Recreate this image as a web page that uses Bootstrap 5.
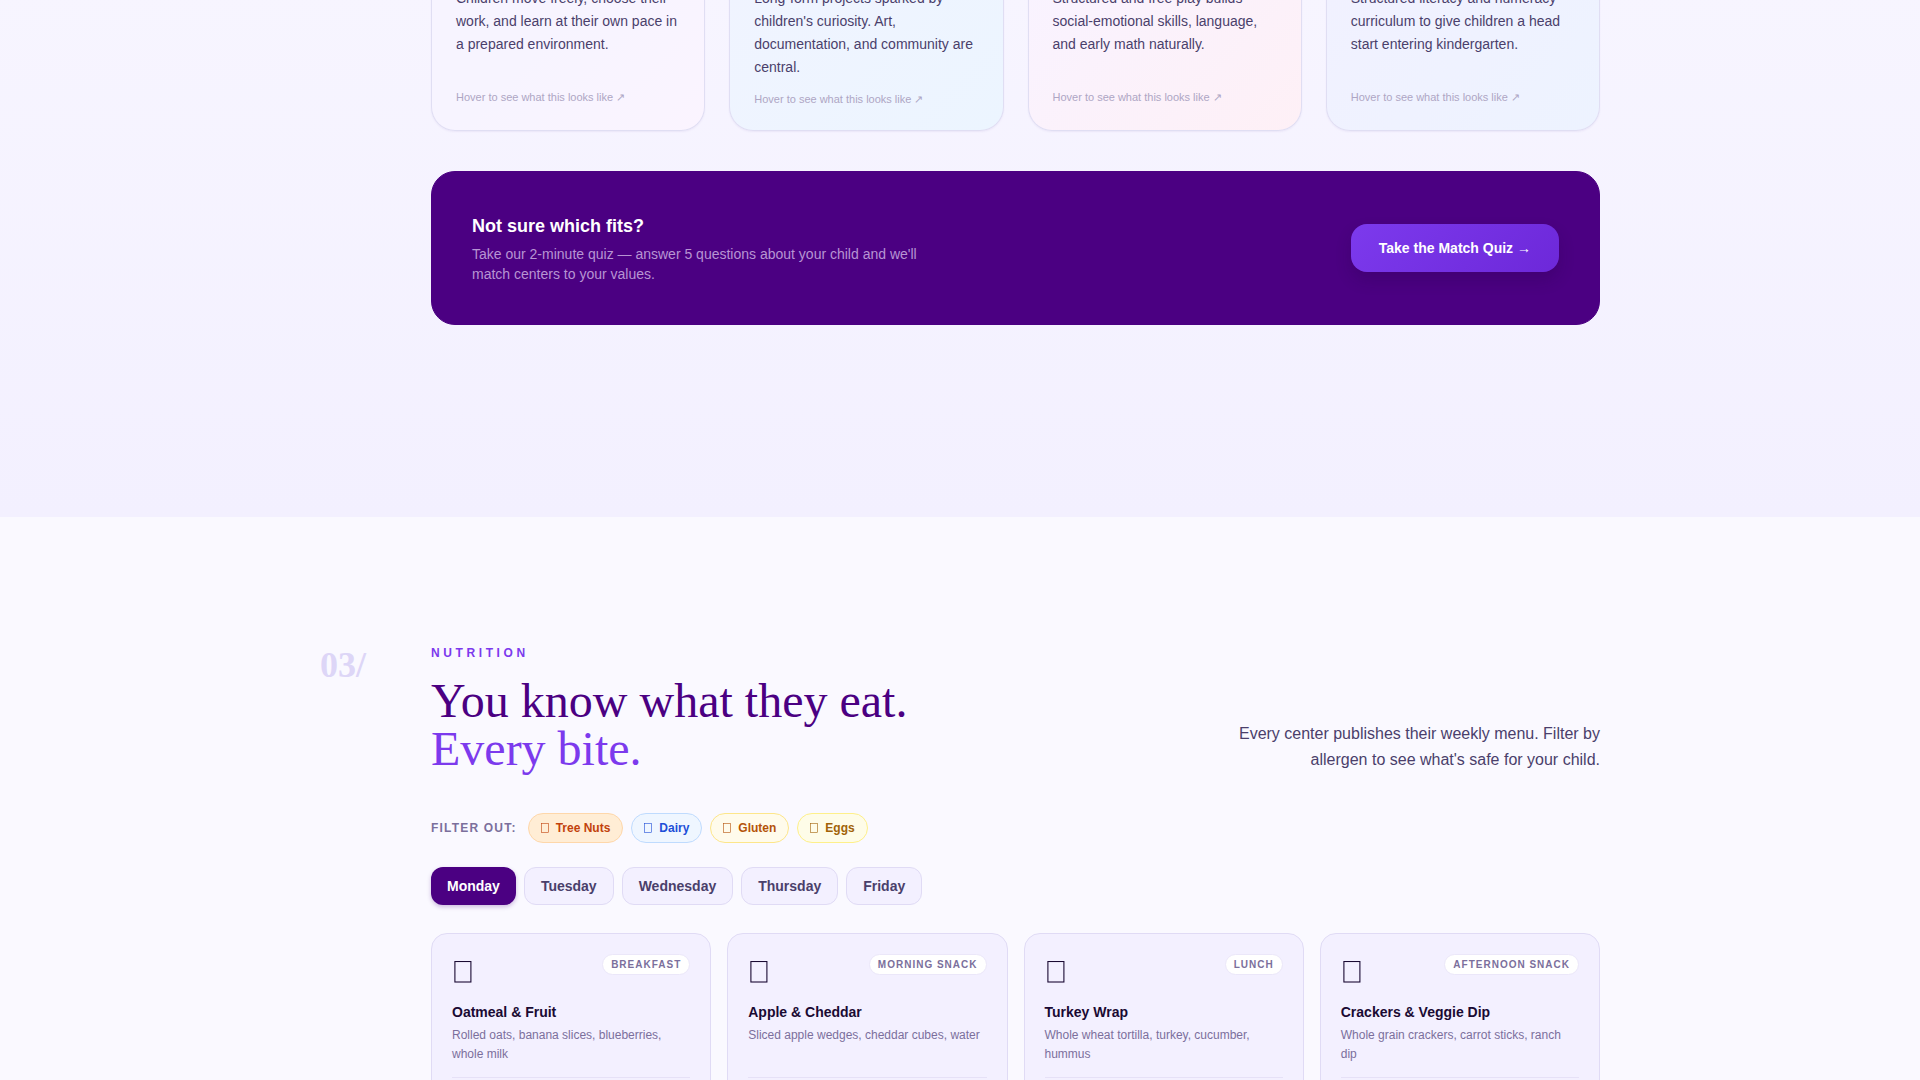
<!DOCTYPE html>
<html lang="en">
<head>
<meta charset="utf-8">
<meta name="viewport" content="width=device-width, initial-scale=1">
<title>Childcare centers</title>
<link href="https://cdn.jsdelivr.net/npm/bootstrap@5.3.0/dist/css/bootstrap.min.css" rel="stylesheet">
<style>
  body { font-family: "Liberation Sans", Arial, sans-serif; color: #1a0a33; background: #faf9ff; }
  .view { height: 100vh; overflow: hidden; }
  .wrap { max-width: 1280px; margin: 0 auto; }
  .numbered { display: grid; grid-template-columns: 47px minmax(0, 1fr); column-gap: 64px; }
  .ink { color: #4a3f6b; }

  /* Approaches */
  .approaches { margin-top: -13px; padding-bottom: 192px; background: linear-gradient(#f7f5ff, #f3f0ff); }
  .tiles { display: grid; grid-template-columns: repeat(4, minmax(0, 1fr)); gap: 24px; margin-bottom: 40px; }
  .tile { padding: 0 24px 23px; border: 1px solid #e0def3; border-top: 0; border-radius: 0 0 24px 24px; box-shadow: 0 1px 2px rgba(75, 0, 130, .06); }
  .tile p { font-size: 14px; line-height: 23px; min-height: 90px; margin-bottom: 12px; }
  .tile small { display: block; font-size: 11px; line-height: 16px; color: #aea6c4; }
  .tile-a { background: linear-gradient(135deg, #f7f4ff 40%, #fbf4ff); }
  .tile-b { background: linear-gradient(135deg, #f0f4ff, #ecf5ff); }
  .tile-c { background: linear-gradient(135deg, #f9f3ff, #fef0f6); }
  .tile-d { background: linear-gradient(135deg, #f1f1ff, #edf3ff); }
  .quiz { background: #4b0082; border: 1px solid #4b0082; border-radius: 24px; padding: 40px; }
  .quiz h3 { font-size: 18px; line-height: 28px; font-weight: 700; margin-bottom: 4px; }
  .quiz p { font-size: 14px; line-height: 20px; max-width: 448px; color: #b794d3; }
  .quiz-btn { font-size: 14px; line-height: 20px; font-weight: 700; color: #fff; padding: 14px 28px; border: 0; border-radius: 16px; background: linear-gradient(135deg, #7c3aed, #6d28d9); box-shadow: 0 8px 16px rgba(30, 0, 60, .2); }

  /* Nutrition */
  .nutrition { padding-top: 128px; }
  .section-no { font-family: "Liberation Serif", serif; font-weight: 700; font-size: 36px; line-height: 40px; color: #ddd6f7; }
  .eyebrow { font-size: 12px; line-height: 16px; font-weight: 700; letter-spacing: .3em; color: #7c3aed; margin-bottom: 16px; }
  .headline { font-family: "Liberation Serif", serif; font-size: 48px; line-height: 48px; font-weight: 400; color: #4b0082; }
  .headline span { color: #7c3aed; }
  .blurb { font-size: 16px; line-height: 26px; max-width: 384px; }
  .filter-label { font-size: 12px; line-height: 18px; font-weight: 700; letter-spacing: .1em; color: #7b6f9c; margin-right: 3px; }
  .pill { display: inline-flex; align-items: center; gap: 7px; font-size: 12px; line-height: 18px; font-weight: 700; padding: 5px 12px; border: 1px solid; border-radius: 15px; }
  .pill-nuts { color: #c2410c; background: #ffedd5; border-color: #fed7aa; }
  .pill-dairy { color: #1d4ed8; background: #eff6ff; border-color: #bfdbfe; }
  .pill-gluten { color: #b45309; background: #fffbeb; border-color: #fde68a; }
  .pill-eggs { color: #a16207; background: #fefce8; border-color: #fef08a; }
  .day { font-size: 14px; line-height: 20px; font-weight: 700; padding: 8px 16px; color: #4a3f6b; background: #f3f0ff; border: 1px solid #e0dbf5; border-radius: 12px; }
  .day.active { color: #fff; background: #4b0082; border: 0; padding: 9px 16px; box-shadow: 0 2px 4px rgba(75, 0, 130, .25); }
  .meals { display: grid; grid-template-columns: repeat(4, minmax(0, 1fr)); gap: 16px; }
  .meal { padding: 20px; background: #f3f0ff; border: 1px solid #e0dbf5; border-radius: 16px; }
  .meal-top { height: 36px; margin-bottom: 12px; }
  .meal-top svg { margin: 7px 2px; }
  .slot { font-size: 10px; line-height: 15px; font-weight: 700; letter-spacing: 1px; color: #7b6f9c; background: #fff; border: 1px solid #ebe7f9; border-radius: 11px; padding: 2px 8px; }
  .meal h4 { font-size: 14px; line-height: 20px; font-weight: 700; margin-bottom: 4px; }
  .meal p { font-size: 12px; line-height: 19px; min-height: 38px; color: #7b6f9c; margin-bottom: 13px; }
  .meal hr { margin: 0 0 40px; border-color: #e6e1f7; opacity: 1; }
</style>
</head>
<body>
<svg class="d-none" aria-hidden="true">
  <symbol id="box-s" viewBox="0 0 8 10"><rect x=".5" y=".5" width="7" height="9" fill="none" stroke="currentColor" stroke-width=".6"/></symbol>
  <symbol id="box-l" viewBox="0 0 18 22"><rect x=".9" y=".5" width="16" height="20.5" fill="none" stroke="currentColor" stroke-width="1.1"/></symbol>
</svg>
<main class="view">
  <section class="approaches">
    <div class="wrap numbered">
      <div></div>
      <div>
        <div class="tiles">
          <article class="tile tile-a"><p class="ink">Children move freely, choose their work, and learn at their own pace in a prepared environment.</p><small>Hover to see what this looks like ↗</small></article>
          <article class="tile tile-b"><p class="ink">Long-form projects sparked by children's curiosity. Art, documentation, and community are central.</p><small>Hover to see what this looks like ↗</small></article>
          <article class="tile tile-c"><p class="ink">Structured and free play builds social-emotional skills, language, and early math naturally.</p><small>Hover to see what this looks like ↗</small></article>
          <article class="tile tile-d"><p class="ink">Structured literacy and numeracy curriculum to give children a head start entering kindergarten.</p><small>Hover to see what this looks like ↗</small></article>
        </div>
        <div class="quiz d-flex justify-content-between align-items-center">
          <div>
            <h3 class="text-white">Not sure which fits?</h3>
            <p class="mb-0">Take our 2-minute quiz — answer 5 questions about your child and we'll match centers to your values.</p>
          </div>
          <button type="button" class="quiz-btn">Take the Match Quiz →</button>
        </div>
      </div>
    </div>
  </section>

  <section class="nutrition">
    <div class="wrap numbered">
      <div class="section-no">03/</div>
      <div>
        <div class="d-flex justify-content-between align-items-end mb-4 pb-3">
          <div>
            <div class="eyebrow">NUTRITION</div>
            <h2 class="headline mb-0">You know what they eat.<br><span>Every bite.</span></h2>
          </div>
          <p class="blurb ink text-end mb-0">Every center publishes their weekly menu. Filter by allergen to see what's safe for your child.</p>
        </div>
        <div class="d-flex align-items-center gap-2 mb-4">
          <span class="filter-label">FILTER OUT:</span>
          <button type="button" class="pill pill-nuts"><svg width="8" height="10"><use href="#box-s"/></svg>Tree Nuts</button>
          <button type="button" class="pill pill-dairy"><svg width="8" height="10"><use href="#box-s"/></svg>Dairy</button>
          <button type="button" class="pill pill-gluten"><svg width="8" height="10"><use href="#box-s"/></svg>Gluten</button>
          <button type="button" class="pill pill-eggs"><svg width="8" height="10"><use href="#box-s"/></svg>Eggs</button>
        </div>
        <div class="d-flex gap-2 mb-4 pb-1">
          <button type="button" class="day active">Monday</button>
          <button type="button" class="day">Tuesday</button>
          <button type="button" class="day">Wednesday</button>
          <button type="button" class="day">Thursday</button>
          <button type="button" class="day">Friday</button>
        </div>
        <div class="meals">
          <article class="meal">
            <div class="meal-top d-flex justify-content-between align-items-start"><svg width="18" height="22"><use href="#box-l"/></svg><span class="slot">BREAKFAST</span></div>
            <h4>Oatmeal &amp; Fruit</h4><p>Rolled oats, banana slices, blueberries, whole milk</p><hr>
          </article>
          <article class="meal">
            <div class="meal-top d-flex justify-content-between align-items-start"><svg width="18" height="22"><use href="#box-l"/></svg><span class="slot">MORNING SNACK</span></div>
            <h4>Apple &amp; Cheddar</h4><p>Sliced apple wedges, cheddar cubes, water</p><hr>
          </article>
          <article class="meal">
            <div class="meal-top d-flex justify-content-between align-items-start"><svg width="18" height="22"><use href="#box-l"/></svg><span class="slot">LUNCH</span></div>
            <h4>Turkey Wrap</h4><p>Whole wheat tortilla, turkey, cucumber, hummus</p><hr>
          </article>
          <article class="meal">
            <div class="meal-top d-flex justify-content-between align-items-start"><svg width="18" height="22"><use href="#box-l"/></svg><span class="slot">AFTERNOON SNACK</span></div>
            <h4>Crackers &amp; Veggie Dip</h4><p>Whole grain crackers, carrot sticks, ranch dip</p><hr>
          </article>
        </div>
      </div>
    </div>
  </section>
</main>
<script src="https://cdn.jsdelivr.net/npm/bootstrap@5.3.0/dist/js/bootstrap.bundle.min.js"></script>
</body>
</html>
